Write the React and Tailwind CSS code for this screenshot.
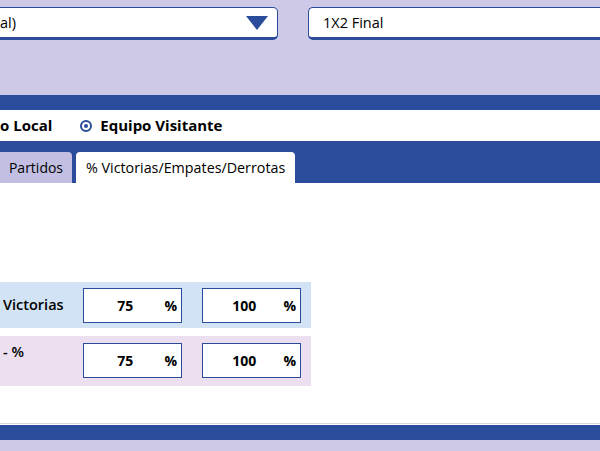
import React from 'react'

const blue = 'bg-[#2b4c9b]'

function NumBox({ value }) {
  return (
    <div className="w-[99px] h-[35px] bg-white border border-[#2b4c9b] flex items-center text-[14px] font-bold text-black">
      <span className="flex-1 text-center pl-[2px]">{value}</span>
      <span className="pr-[4px]">%</span>
    </div>
  )
}

export default function App() {
  return (
    <div className="w-[600px] h-[451px] overflow-hidden bg-white flex flex-col font-['Open_Sans',sans-serif] text-black">
      {/* top selectors */}
      <div className="h-[95px] bg-[#cdc9e6] pt-[7px] flex items-start shrink-0">
        <div className="w-[278px] h-[33px] bg-white border border-l-0 border-b-[3px] border-[#2b4c9b] rounded-r-[5px] flex items-center justify-between pr-[9px]">
          <span className="text-[14.5px] leading-none pt-[2px]">al)</span>
          <svg width="22" height="14" viewBox="0 0 22 14">
            <polygon points="0,0 22,0 11,14" fill="#2b4c9b" />
          </svg>
        </div>
        <div className="ml-[30px] flex-1 h-[33px] bg-white border border-r-0 border-b-[3px] border-[#2b4c9b] rounded-l-[5px] flex items-center pl-[14px]">
          <span className="text-[14.5px] leading-none pt-[2px]">1X2 Final</span>
        </div>
      </div>

      <div className={`h-[15px] ${blue} shrink-0`} />

      {/* radio row */}
      <div className="h-[31px] flex items-center text-[15px] font-bold shrink-0">
        <span>o Local</span>
        <span className="ml-[28px] w-[12px] h-[12px] rounded-full border-2 border-[#2b4c9b] flex items-center justify-center">
          <span className="w-[4px] h-[4px] rounded-full bg-[#2b4c9b]" />
        </span>
        <span className="ml-[8px]">Equipo Visitante</span>
      </div>

      {/* tabs */}
      <div className={`h-[42px] ${blue} flex items-end gap-[4px] shrink-0`}>
        <div className="h-[31px] w-[72px] bg-[#c2bfe3] rounded-tr-[4px] flex items-center justify-center text-[14px]">
          Partidos
        </div>
        <div className="h-[31px] w-[219px] bg-white rounded-t-[4px] flex items-center px-[10px] text-[14.3px] whitespace-nowrap">
          % Victorias/Empates/Derrotas
        </div>
      </div>

      {/* content */}
      <div className="flex-1 pt-[99px] border-b border-[#d6d6d6]">
        <div className="w-[311px] h-[46px] bg-[#d2e3f5] flex items-center pl-[3px]">
          <span className="w-[80px] text-[14.5px] font-semibold">Victorias</span>
          <NumBox value="75" />
          <div className="w-[20px]" />
          <NumBox value="100" />
        </div>
        <div className="mt-[8px] w-[311px] h-[50px] bg-[#ebdff0] flex items-start pt-[7px] pl-[3px]">
          <span className="w-[80px] text-[14.5px] font-semibold leading-none pt-[2px]">- %</span>
          <NumBox value="75" />
          <div className="w-[20px]" />
          <NumBox value="100" />
        </div>
      </div>

      <div className="h-[1px] bg-white shrink-0" />
      <div className={`h-[15px] ${blue} shrink-0`} />
      <div className="h-[11px] bg-[#cdc9e6] shrink-0" />
    </div>
  )
}
